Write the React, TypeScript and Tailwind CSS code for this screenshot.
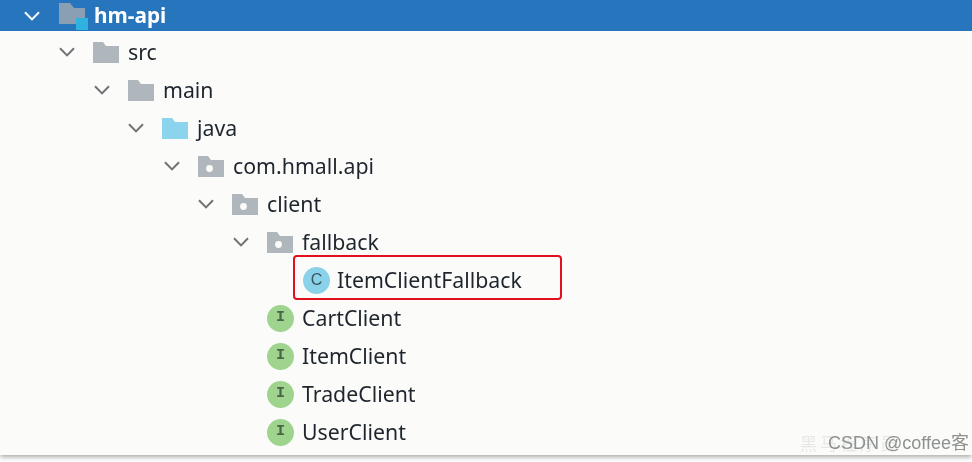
import React from 'react';

function Chevron({ light }: { light?: boolean }) {
  return (
    <svg width="16" height="10" viewBox="0 0 16 10" fill="none" className="shrink-0">
      <path d="M1 1.2 8 8.4 15 1.2" stroke={light ? '#ffffff' : '#6f7374'} strokeWidth="2" />
    </svg>
  );
}

function Folder({ color = '#afb6bc', dot }: { color?: string; dot?: boolean }) {
  return (
    <svg width="26" height="22" viewBox="0 0 26 22" className="shrink-0">
      <path d="M0 1h10l3 4h13v17H0z" fill={color} />
      {dot && <circle cx="11.5" cy="13.5" r="3.4" fill="#fbfcfa" />}
    </svg>
  );
}

function ModuleFolder() {
  return (
    <svg width="29" height="29" viewBox="0 0 29 29" className="shrink-0">
      <path d="M0 2h11l4 5h11v16H0z" fill="#8b9fb2" />
      <rect x="17" y="17" width="12" height="12" fill="#2fb2df" />
    </svg>
  );
}

function Badge({ letter, kind }: { letter: string; kind: 'class' | 'iface' }) {
  return (
    <span
      className={
        kind === 'class'
          ? 'flex h-[27px] w-[27px] shrink-0 items-center justify-center rounded-full bg-[#8ad2ea] font-["Liberation_Sans",sans-serif] text-[16px] text-[#3c5560]'
          : 'flex h-[27px] w-[27px] shrink-0 items-center justify-center rounded-full bg-[#9fd48f] font-["Liberation_Mono",monospace] text-[15px] font-bold text-[#4a6547]'
      }
    >
      {letter}
    </span>
  );
}

function Row({ pad, children }: { pad: string; children: React.ReactNode }) {
  return <div className={`flex h-[38px] items-center ${pad}`}>{children}</div>;
}

function Label({ children }: { children: React.ReactNode }) {
  return <span className="text-[21.3px] leading-none text-[#1f252d]">{children}</span>;
}

function FolderRow({ pad, name, color, dot }: { pad: string; name: string; color?: string; dot?: boolean }) {
  return (
    <Row pad={pad}>
      <Chevron />
      <span className="ml-[18px] mr-[9px] flex">
        <Folder color={color} dot={dot} />
      </span>
      <Label>{name}</Label>
    </Row>
  );
}

function FileRow({ name }: { name: string }) {
  return (
    <Row pad="pl-[267px]">
      <Badge letter="I" kind="iface" />
      <span className="ml-[8px] flex">
        <Label>{name}</Label>
      </span>
    </Row>
  );
}

export default function App() {
  return (
    <div className='relative h-[462px] w-[972px] overflow-hidden bg-white font-["Noto_Sans",sans-serif] blur-[0.45px]'>
      <div className="h-[455px] bg-[#fbfcfa] shadow-[0_2px_5px_rgba(0,0,0,0.35)]">
        <div className="flex h-[31px] items-center bg-[#2675bd] pl-[24px]">
          <Chevron light />
          <span className="ml-[19px] mr-[6px] flex">
            <ModuleFolder />
          </span>
          <span className="text-[20.8px] font-bold leading-none text-white">hm-api</span>
        </div>
        <div className="pt-[2px]">
          <FolderRow pad="pl-[59px]" name="src" />
          <FolderRow pad="pl-[94px]" name="main" />
          <FolderRow pad="pl-[128px]" name="java" color="#8cd3ee" />
          <FolderRow pad="pl-[164px]" name="com.hmall.api" dot />
          <FolderRow pad="pl-[198px]" name="client" dot />
          <FolderRow pad="pl-[233px]" name="fallback" dot />
          <Row pad="pl-[303px]">
            <Badge letter="C" kind="class" />
            <span className="ml-[7px] flex">
              <Label>ItemClientFallback</Label>
            </span>
            <div className="absolute left-[293px] top-[255px] h-[45px] w-[269px] rounded-[4px] border-[2px] border-[#e2101c]" />
          </Row>
          <FileRow name="CartClient" />
          <FileRow name="ItemClient" />
          <FileRow name="TradeClient" />
          <FileRow name="UserClient" />
        </div>
      </div>
      <div className='absolute left-[800px] top-[434px] font-["Noto_Sans_CJK_SC",sans-serif] text-[17px] leading-none tracking-[3px] text-[#e6e8e6]'>
        黑马程序员
      </div>
      <div className='absolute right-[3px] top-[434px] font-["Liberation_Sans","Noto_Sans_CJK_SC",sans-serif] text-[18px] leading-none text-[#8d9190]'>
        CSDN @coffee客
      </div>
    </div>
  );
}
